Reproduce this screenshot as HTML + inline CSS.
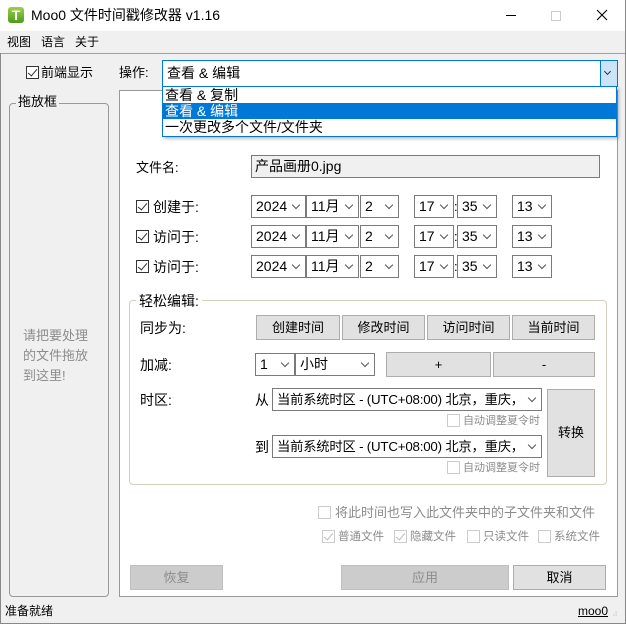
<!DOCTYPE html>
<html><head><meta charset="utf-8"><style>
*{box-sizing:border-box;margin:0;padding:0}
body{width:626px;height:624px;overflow:hidden;background:#f0f0f0;font-family:"Liberation Sans","Noto Sans CJK SC",sans-serif;font-size:13px;color:#000;position:relative}
.a{position:absolute;white-space:nowrap}
.t{position:absolute;white-space:nowrap;line-height:16px}
.sel{position:absolute;background:#fff;border:1px solid #7a7a7a;height:23px;line-height:21px;padding-left:4px;font-size:14px;white-space:nowrap;overflow:hidden}
.sel:after{content:"";position:absolute;right:6px;top:6px;width:5px;height:5px;border-right:1px solid #555;border-bottom:1px solid #555;transform:rotate(45deg)}
.btn{position:absolute;background:#e1e1e1;border:1px solid #adadad;text-align:center;font-size:13px}
.cb{position:absolute;width:13px;height:13px;border:1px solid #333;background:#fff}
.cb.g{border-color:#ccc}
.ck:before{content:"";position:absolute;left:3px;top:0px;width:4px;height:8px;border-right:1.3px solid #333;border-bottom:1.3px solid #333;transform:rotate(40deg)}
.cb.g.ck:before{border-color:#bbb}
.gray{color:#8c8c8c}
</style></head><body>
<div class="a" style="left:0;top:0;width:626px;height:31px;background:#fff"></div>
<div class="a" style="left:8px;top:7px;width:16px;height:16px;border-radius:3px;background:linear-gradient(#9ed04a,#4e9a1a);color:#fff;font-weight:bold;font-size:14px;line-height:16px;text-align:center">T</div>
<div class="t" style="left:31px;top:7px;font-size:14px">Moo0 文件时间戳修改器 v1.16</div>
<div class="a" style="left:506px;top:15px;width:10px;height:1px;background:#000"></div>
<div class="a" style="left:551px;top:11px;width:10px;height:10px;border:1px solid #ccc"></div>
<svg class="a" style="left:596px;top:9px" width="12" height="12"><path d="M1 1L11 11M11 1L1 11" stroke="#000" stroke-width="1.1"/></svg>
<div class="t" style="left:7px;top:34px;font-size:12px">视图</div>
<div class="t" style="left:41px;top:34px;font-size:12px">语言</div>
<div class="t" style="left:75px;top:34px;font-size:12px">关于</div>
<div class="a" style="left:0;top:53px;width:626px;height:1px;background:#a0a0a0"></div>
<div class="a" style="left:0;top:53px;width:1px;height:571px;background:#888"></div>
<div class="a" style="left:625px;top:0;width:1px;height:624px;background:#888"></div>
<div class="a" style="left:0;top:623px;width:626px;height:1px;background:#888"></div>

<div class="cb ck" style="left:26px;top:66px"></div>
<div class="t" style="left:41px;top:65px">前端显示</div>
<div class="t" style="left:119px;top:65px">操作:</div>

<div class="a" style="left:9px;top:103px;width:100px;height:494px;border:1px solid #999;border-radius:4px"></div>
<div class="t" style="left:16px;top:94px;background:#f0f0f0;padding:0 2px">拖放框</div>
<div class="t gray" style="left:23px;top:326px;line-height:20px;white-space:normal;width:70px">请把要处理<br>的文件拖放<br>到这里!</div>

<div class="a" style="left:119px;top:90px;width:499px;height:507px;background:#fff;border:1px solid #999"></div>

<div class="t" style="left:136px;top:160px">文件名:</div>
<div class="a" style="left:251px;top:155px;width:349px;height:23px;background:#f0f0f0;border:1px solid #7a7a7a;line-height:21px;padding-left:3px;font-size:14px">产品画册0.jpg</div>

<div class="cb ck" style="left:136px;top:200px"></div><div class="t" style="left:153px;top:199px;font-size:14px">创建于:</div>
<div class="cb ck" style="left:136px;top:230px"></div><div class="t" style="left:153px;top:229px;font-size:14px">访问于:</div>
<div class="cb ck" style="left:136px;top:260px"></div><div class="t" style="left:153px;top:259px;font-size:14px">访问于:</div>

<div class="sel" style="left:251px;top:195px;width:55px">2024</div><div class="sel" style="left:306px;top:195px;width:53px">11月</div><div class="sel" style="left:360px;top:195px;width:39px">2</div><div class="sel" style="left:414px;top:195px;width:40px">17</div><div class="t" style="left:454px;top:199px">:</div><div class="sel" style="left:457px;top:195px;width:40px">35</div><div class="sel" style="left:512px;top:195px;width:40px">13</div>
<div class="sel" style="left:251px;top:225px;width:55px">2024</div><div class="sel" style="left:306px;top:225px;width:53px">11月</div><div class="sel" style="left:360px;top:225px;width:39px">2</div><div class="sel" style="left:414px;top:225px;width:40px">17</div><div class="t" style="left:454px;top:229px">:</div><div class="sel" style="left:457px;top:225px;width:40px">35</div><div class="sel" style="left:512px;top:225px;width:40px">13</div>
<div class="sel" style="left:251px;top:255px;width:55px">2024</div><div class="sel" style="left:306px;top:255px;width:53px">11月</div><div class="sel" style="left:360px;top:255px;width:39px">2</div><div class="sel" style="left:414px;top:255px;width:40px">17</div><div class="t" style="left:454px;top:259px">:</div><div class="sel" style="left:457px;top:255px;width:40px">35</div><div class="sel" style="left:512px;top:255px;width:40px">13</div>

<div class="a" style="left:129px;top:300px;width:478px;height:185px;border:1px solid #d4d0c0;border-radius:4px"></div>
<div class="t" style="left:136px;top:293px;background:#fff;padding:0 3px;font-size:14px">轻松编辑:</div>
<div class="t" style="left:140px;top:320px;font-size:14px">同步为:</div>
<div class="btn" style="left:256px;top:315px;width:84px;height:25px;line-height:23px">创建时间</div>
<div class="btn" style="left:342px;top:315px;width:83px;height:25px;line-height:23px">修改时间</div>
<div class="btn" style="left:427px;top:315px;width:83px;height:25px;line-height:23px">访问时间</div>
<div class="btn" style="left:512px;top:315px;width:83px;height:25px;line-height:23px">当前时间</div>
<div class="t" style="left:140px;top:357px;font-size:14px">加减:</div>
<div class="sel" style="left:255px;top:353px;width:40px">1</div>
<div class="sel" style="left:295px;top:353px;width:80px">小时</div>
<div class="btn" style="left:386px;top:352px;width:105px;height:25px;line-height:23px">+</div>
<div class="btn" style="left:493px;top:352px;width:102px;height:25px;line-height:23px">-</div>
<div class="t" style="left:140px;top:392px;font-size:14px">时区:</div>
<div class="t" style="left:255px;top:392px;font-size:14px">从</div>
<div class="sel" style="left:272px;top:388px;width:270px;font-size:13.3px;letter-spacing:-0.2px">当前系统时区 - (UTC+08:00) 北京，重庆，</div>
<div class="cb g" style="left:447px;top:414px"></div><div class="t gray" style="left:463px;top:413px;font-size:11px">自动调整夏令时</div>
<div class="t" style="left:255px;top:439px;font-size:14px">到</div>
<div class="sel" style="left:272px;top:435px;width:270px;font-size:13.3px;letter-spacing:-0.2px">当前系统时区 - (UTC+08:00) 北京，重庆，</div>
<div class="cb g" style="left:447px;top:461px"></div><div class="t gray" style="left:463px;top:460px;font-size:11px">自动调整夏令时</div>
<div class="btn" style="left:547px;top:389px;width:48px;height:88px;line-height:86px">转换</div>

<div class="cb g" style="left:318px;top:506px"></div><div class="t gray" style="left:335px;top:505px">将此时间也写入此文件夹中的子文件夹和文件</div>
<div class="cb g ck" style="left:322px;top:530px"></div><div class="t gray" style="left:338px;top:529px;font-size:11.5px">普通文件</div>
<div class="cb g ck" style="left:394px;top:530px"></div><div class="t gray" style="left:410px;top:529px;font-size:11.5px">隐藏文件</div>
<div class="cb g" style="left:467px;top:530px"></div><div class="t gray" style="left:483px;top:529px;font-size:11.5px">只读文件</div>
<div class="cb g" style="left:538px;top:530px"></div><div class="t gray" style="left:554px;top:529px;font-size:11.5px">系统文件</div>

<div class="btn gray" style="left:130px;top:565px;width:93px;height:25px;line-height:23px;background:#ccc;border-color:#bfbfbf">恢复</div>
<div class="btn gray" style="left:341px;top:565px;width:168px;height:25px;line-height:23px;background:#ccc;border-color:#bfbfbf">应用</div>
<div class="btn" style="left:513px;top:565px;width:93px;height:25px;line-height:23px">取消</div>

<div class="t" style="left:5px;top:603px;font-size:12px">准备就绪</div>
<div class="t" style="left:578px;top:603px;font-size:12px;text-decoration:underline">moo0</div>
<div class="t" style="left:612px;top:606px;font-size:8px;color:#bbb;letter-spacing:-1px">⠴</div>

<div class="a" style="left:162px;top:60px;width:456px;height:27px;background:#fff;border:1px solid #0078d7;line-height:24px;padding-left:4px;font-size:14px">查看 &amp; 编辑</div>
<div class="a" style="left:600px;top:61px;width:17px;height:25px;background:#cce4f7;border-left:1px solid #0078d7"></div>
<div class="a" style="left:605px;top:69px;width:5px;height:5px;border-right:1px solid #333;border-bottom:1px solid #333;transform:rotate(45deg)"></div>
<div class="a" style="left:162px;top:86px;width:455px;height:51px;background:#fff;border:1px solid #0078d7;box-shadow:2px 2px 3px rgba(0,0,0,.25);font-size:14px">
<div style="height:16px;line-height:16px;padding-left:2px">查看 &amp; 复制</div>
<div style="height:16px;line-height:16px;padding-left:2px;background:#0078d7;color:#fff">查看 &amp; 编辑</div>
<div style="height:16px;line-height:16px;padding-left:2px">一次更改多个文件/文件夹</div>
</div>
</body></html>
